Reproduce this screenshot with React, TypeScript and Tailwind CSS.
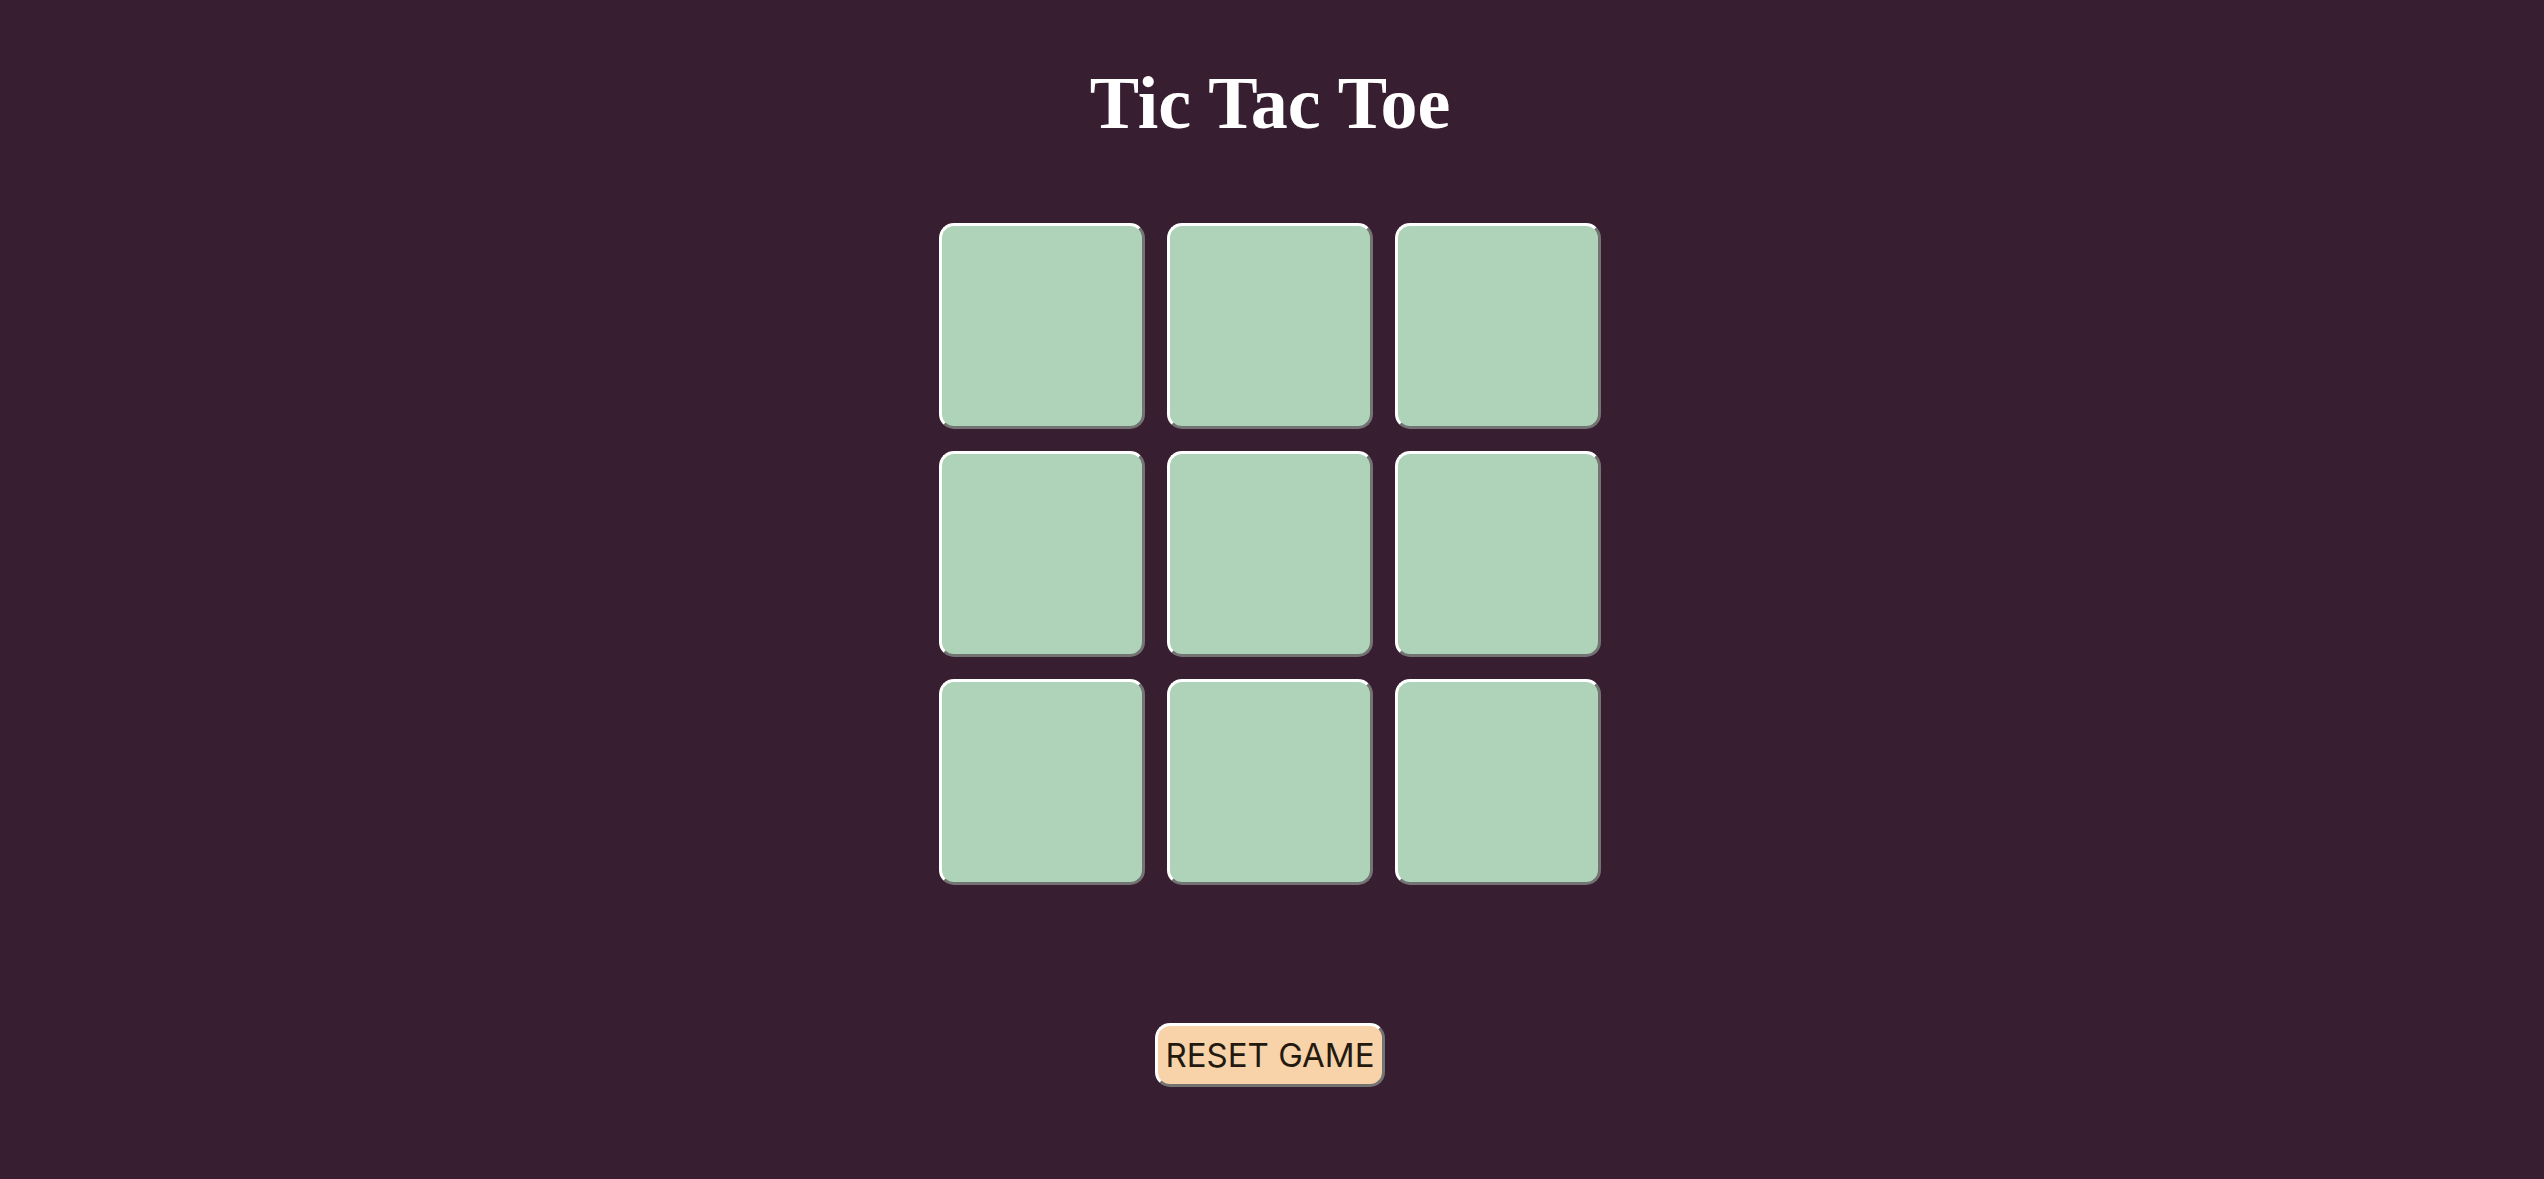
import { useState } from 'react';

type Mark = 'X' | 'O' | null;

const Cell = ({ value, onClick }: { value: Mark; onClick: () => void }) => (
  <button
    onClick={onClick}
    className="flex items-center justify-center w-[206px] h-[206px] rounded-[15px] border-[3px] border-t-white border-l-white border-b-[#737373] border-r-[#737373] bg-[#afd3b8] text-[#381e31] text-[120px] font-bold font-['Liberation_Serif',serif] cursor-pointer"
  >
    {value}
  </button>
);

export default function App() {
  const [board, setBoard] = useState<Mark[]>(Array(9).fill(null));
  const [xNext, setXNext] = useState(true);

  const play = (i: number) => {
    if (board[i]) return;
    const next = [...board];
    next[i] = xNext ? 'X' : 'O';
    setBoard(next);
    setXNext(!xNext);
  };

  const reset = () => {
    setBoard(Array(9).fill(null));
    setXNext(true);
  };

  return (
    <div className="min-h-screen w-full bg-[#381e31] flex flex-col items-center pr-[4px]">
      <h1 className="pt-[66px] text-[74px] leading-none font-bold text-white font-['Liberation_Serif',serif]">
        Tic Tac Toe
      </h1>

      <div className="mt-[83px] grid grid-cols-3 gap-[22px]">
        {board.map((v, i) => (
          <Cell key={i} value={v} onClick={() => play(i)} />
        ))}
      </div>

      <button
        onClick={reset}
        className="mt-[138px] w-[230px] h-[64px] rounded-[15px] border-[3px] border-t-white border-l-white border-b-[#737373] border-r-[#737373] bg-[#f8d3a9] text-[#24190f] text-[33px] leading-none font-['Inter','Liberation_Sans',sans-serif] cursor-pointer"
      >
        RESET GAME
      </button>
    </div>
  );
}
